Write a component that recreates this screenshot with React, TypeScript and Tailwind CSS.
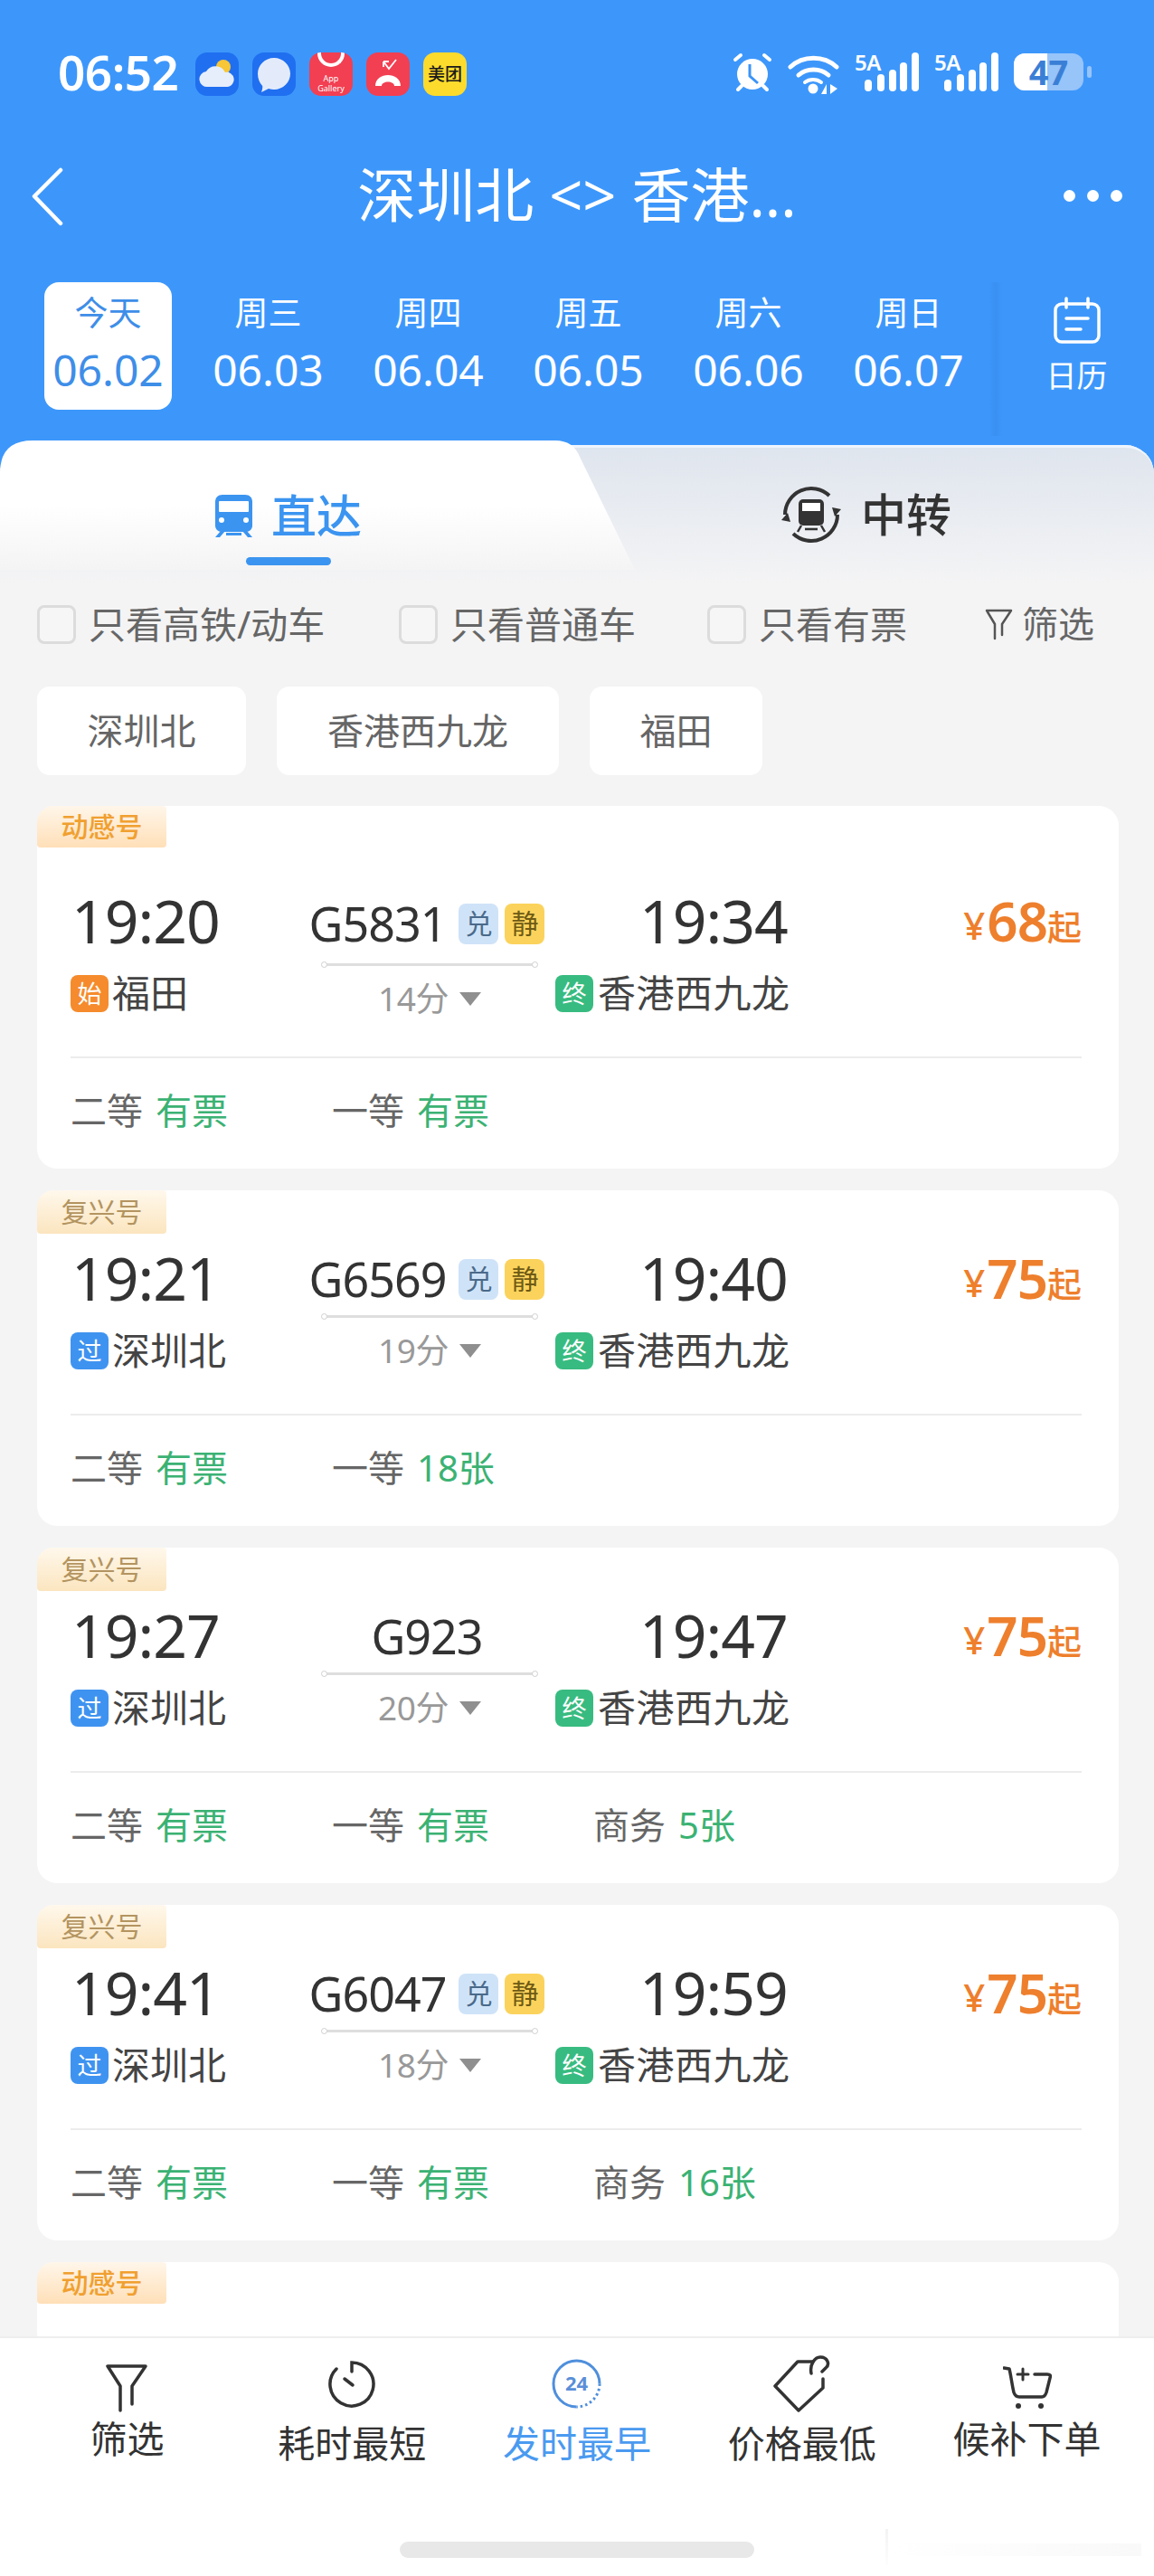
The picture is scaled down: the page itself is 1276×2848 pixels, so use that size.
import React from "react";

const FONT = { fontFamily: '"Noto Sans", "Noto Sans CJK SC", sans-serif' };

interface Seat {
  name: string;
  state: string;
}

interface Train {
  badge: "动感号" | "复兴号";
  dep: string;
  code: string;
  tags: boolean;
  arr: string;
  mark: "始" | "过";
  from: string;
  mins: string;
  price: string;
  seats: Seat[];
}

const trains: Train[] = [
  { badge: "动感号", dep: "19:20", code: "G5831", tags: true, arr: "19:34", mark: "始", from: "福田", mins: "14分", price: "68", seats: [{ name: "二等", state: "有票" }, { name: "一等", state: "有票" }] },
  { badge: "复兴号", dep: "19:21", code: "G6569", tags: true, arr: "19:40", mark: "过", from: "深圳北", mins: "19分", price: "75", seats: [{ name: "二等", state: "有票" }, { name: "一等", state: "18张" }] },
  { badge: "复兴号", dep: "19:27", code: "G923", tags: false, arr: "19:47", mark: "过", from: "深圳北", mins: "20分", price: "75", seats: [{ name: "二等", state: "有票" }, { name: "一等", state: "有票" }, { name: "商务", state: "5张" }] },
  { badge: "复兴号", dep: "19:41", code: "G6047", tags: true, arr: "19:59", mark: "过", from: "深圳北", mins: "18分", price: "75", seats: [{ name: "二等", state: "有票" }, { name: "一等", state: "有票" }, { name: "商务", state: "16张" }] },
];

const days = [
  ["周三", "06.03"],
  ["周四", "06.04"],
  ["周五", "06.05"],
  ["周六", "06.06"],
  ["周日", "06.07"],
];

function Signal() {
  return (
    <div className="relative w-[71px] h-[43px]">
      <span className="absolute left-0 -top-[1px] text-[24px] leading-[24px] font-semibold text-white tracking-[-0.5px]">5A</span>
      <svg className="absolute left-0 top-0" width="71" height="43" viewBox="0 0 71 43">
        <g fill="#fff">
          <rect x="11" y="30" width="8" height="13" rx="4" />
          <rect x="25" y="24" width="8" height="19" rx="4" />
          <rect x="38" y="19" width="8" height="24" rx="4" />
          <rect x="50" y="11" width="8" height="32" rx="4" />
          <rect x="63" y="0" width="8" height="43" rx="4" />
        </g>
      </svg>
    </div>
  );
}

function StatusBar() {
  return (
    <div className="h-[130px] pt-[56px] pl-[64px] pr-[69px] flex items-start">
      <span className="w-[152px] text-[53px] leading-[48px] font-semibold text-white tracking-[-0.5px]">06:52</span>
      <div className="mt-[2px] flex gap-[15px]">
        <div className="w-[48px] h-[48px] rounded-[13px] bg-[#1f6ff0] flex items-center justify-center">
          <svg width="42" height="38" viewBox="0 0 42 38">
            <circle cx="28" cy="11" r="8" fill="#f8c636" />
            <path d="M11 33a8.500 8.500 0 0 1-2-17 12 12 0 0 1 21 1 8 8 0 0 1 3 16z" fill="#e6eefb" />
          </svg>
        </div>
        <div className="w-[48px] h-[48px] rounded-[13px] bg-[#1f6ff0] flex items-center justify-center">
          <svg width="38" height="40" viewBox="0 0 38 40">
            <path d="M19 2c10 0 18 8 18 17.500S29 37 19 37c-2 0-4-.3-6-1l-8 4c1-3 1.500-5 1.200-7C3 29.500 1 25 1 19.500 1 10 9 2 19 2z" fill="#e3ebfb" />
          </svg>
        </div>
        <div className="relative w-[48px] h-[48px] rounded-[13px] bg-[#f23f52] overflow-hidden flex flex-col items-center justify-end pb-[3px]">
          <div className="absolute -top-[10px] left-[9px] w-[30px] h-[26px] rounded-b-full border-[4px] border-t-0 border-white" />
          <span className="text-[9px] leading-[11px] text-white">App</span>
          <span className="text-[9px] leading-[11px] text-white">Gallery</span>
        </div>
        <div className="w-[48px] h-[48px] rounded-[13px] bg-[#f23f52] flex items-center justify-center">
          <svg width="34" height="36" viewBox="0 0 34 36" fill="none">
            <path d="M12 4l6 8 8-10M12 4v6M12 4h6" stroke="#fff" strokeWidth="1.800" />
            <path d="M3 31c0-16 28-16 28 0h-7c0-6-14-6-14 0z" fill="#fff" />
          </svg>
        </div>
        <div className="w-[48px] h-[48px] rounded-[13px] bg-[#fddb2c] flex items-center justify-center">
          <span className="text-[19px] leading-none font-medium text-[#1a1a1a] whitespace-nowrap">美团</span>
        </div>
      </div>
      <div className="ml-auto mt-[2px] flex items-start gap-[17px]">
        <svg width="44" height="44" viewBox="0 0 44 44">
          <circle cx="22" cy="24" r="17" fill="#fff" />
          <path d="M19 13v13l9 8" stroke="#3b94f8" strokeWidth="3" fill="none" />
          <path d="M3 8l6-5M41 8l-6-5M6 41l4-4M38 41l-4-4" stroke="#fff" strokeWidth="4" strokeLinecap="round" />
        </svg>
        <svg className="mt-[2px]" width="57" height="45" viewBox="0 0 57 45" fill="none">
          <path d="M3 14c14-13 37-13 51 0" stroke="#fff" strokeWidth="5" strokeLinecap="round" />
          <path d="M12 23c9-8 24-8 33 0" stroke="#fff" strokeWidth="5" strokeLinecap="round" />
          <path d="M19 31c5-4 13-4 18 0" stroke="#fff" strokeWidth="4" strokeLinecap="round" />
          <circle cx="28" cy="38" r="5.500" fill="#fff" />
          <path d="M43 44v-11l-6 11zM47 33v11l8-6z" fill="#fff" />
        </svg>
        <Signal />
        <Signal />
        <div className="flex items-center gap-[4px] h-[42px]">
          <div className="relative w-[77px] h-[41px] rounded-[12px] bg-[#97c4f9] flex items-center justify-center">
            <div className="absolute left-0 top-0 bottom-0 w-[37px] rounded-l-[12px] bg-white" />
            <span className="relative text-[38px] leading-[41px] font-bold text-[#3a7fd6]">47</span>
          </div>
          <div className="w-[5px] h-[13px] rounded-full bg-[#97c4f9]" />
        </div>
      </div>
    </div>
  );
}

function TitleBar() {
  return (
    <div className="relative h-[170px] flex items-center justify-center">
      <svg className="absolute left-[33px] top-[55px]" width="38" height="65" viewBox="0 0 38 65" fill="none" stroke="#fff" strokeWidth="4.500" strokeLinecap="round" strokeLinejoin="round">
        <path d="M34 3L5 32l29 30" />
      </svg>
      <span className="text-[65px] leading-[70px] text-white whitespace-nowrap">深圳北 &lt;&gt; 香港...</span>
      <div className="absolute right-[35px] top-[80px] flex gap-[13px]">
        <div className="w-[13px] h-[13px] rounded-full bg-white" />
        <div className="w-[13px] h-[13px] rounded-full bg-white" />
        <div className="w-[13px] h-[13px] rounded-full bg-white" />
      </div>
    </div>
  );
}

function DayTabs() {
  return (
    <div className="h-[192px] pt-[12px] flex items-start pl-[49px]">
      <div className="w-[141px] h-[141px] rounded-[16px] bg-white flex flex-col items-center pt-[7px]">
        <span className="text-[37px] leading-[54px] text-[#3e8ee8]">今天</span>
        <span className="text-[48px] leading-[62px] text-[#3e8ee8] mt-[5px]">06.02</span>
      </div>
      <div className="flex ml-[18px]">
        {days.map(([week, date]) => (
          <div key={date} className="w-[177px] flex flex-col items-center pt-[7px]">
            <span className="text-[37px] leading-[54px] text-white">{week}</span>
            <span className="text-[48px] leading-[62px] text-white mt-[5px]">{date}</span>
          </div>
        ))}
      </div>
      <div className="w-[183px] h-[170px] pl-[12px] bg-[linear-gradient(90deg,#3d97fb,#3a90f2_8px,#3d97fb_16px)] flex flex-col items-center">
        <svg className="mt-[16px]" width="52" height="52" viewBox="0 0 52 52" fill="none" stroke="#fff" strokeWidth="3.500">
          <rect x="2" y="8" width="48" height="42" rx="7" />
          <path d="M14 2v10M38 2v10M14 24h24M14 36h16" strokeLinecap="round" />
        </svg>
        <span className="text-[34px] leading-[46px] text-white mt-[12px]">日历</span>
      </div>
    </div>
  );
}

function TrainIcon({ color }: { color: string }) {
  return (
    <svg width="43" height="48" viewBox="0 0 43 48">
      <path d="M9 1h25c5 0 8 3 8 8v26c0 4-3 7-7 7H8c-4 0-7-3-7-7V9c0-5 3-8 8-8z" fill={color} />
      <rect x="5" y="8" width="33" height="12" rx="1" fill="#fff" />
      <circle cx="8" cy="29" r="3" fill="#fff" />
      <circle cx="35" cy="29" r="3" fill="#fff" />
      <path d="M7 41l-6 7h5l6-7zM36 41l6 7h-5l-6-7zM13 43h17v3H13z" fill={color} />
    </svg>
  );
}

function TransferIcon() {
  return (
    <svg width="66" height="66" viewBox="0 0 66 66" fill="none">
      <path d="M4 33a29 29 0 0 1 49-21" stroke="#333" strokeWidth="4" />
      <path d="M62 33a29 29 0 0 1-49 21" stroke="#333" strokeWidth="4" />
      <path d="M0 39l7-8 3 10zM66 27l-7 8-3-10z" fill="#333" />
      <rect x="19" y="16" width="28" height="29" rx="5" fill="#333" />
      <rect x="23" y="20" width="20" height="9" fill="#fff" />
      <path d="M22 45l-4 7M44 45l4 7M26 49h14" stroke="#333" strokeWidth="2.500" />
    </svg>
  );
}

function Tabs() {
  return (
    <div className="relative h-[154px] bg-[linear-gradient(#dfe5ee,#f4f4f5)] rounded-t-[32px] border-t-[3px] border-[#eef5fd]">
      {/* white active tab with a slanted edge */}
      <div className="absolute left-0 -top-[8px] h-[143px] w-[702px] bg-[linear-gradient(#ffffff_50%,#f4f4f5)] [clip-path:path('M0_143L0_36Q0_0_36_0L614_0Q634_0_641_18L702_143Z')]" />
      <div className="absolute left-[237px] top-[45px] flex items-center gap-[20px]">
        <TrainIcon color="#3b94f0" />
        <span className="text-[50px] leading-[60px] font-medium text-[#3b94f0]">直达</span>
      </div>
      <div className="absolute left-[272px] top-[121px] w-[94px] h-[9px] rounded-full bg-[#3b94f0]" />
      <div className="absolute left-[864px] top-[41px] flex items-center gap-[22px]">
        <TransferIcon />
        <span className="text-[50px] leading-[60px] font-medium text-[#333]">中转</span>
      </div>
    </div>
  );
}

function Check({ label }: { label: string }) {
  return (
    <div className="flex items-center gap-[14px]">
      <div className="w-[43px] h-[43px] rounded-[8px] border-[3px] border-[#dcdcdc] bg-[#f6f6f6]" />
      <span className="text-[41px] leading-[48px] text-[#666] whitespace-nowrap">{label}</span>
    </div>
  );
}

function Chip({ label, w }: { label: string; w: string }) {
  return (
    <div className={`${w} h-[98px] rounded-[14px] bg-white flex items-center justify-center text-[40px] text-[#666]`}>
      {label}
    </div>
  );
}

function Filters() {
  return (
    <>
      <div className="h-[113px] pl-[41px] pt-[20px] flex items-start">
        <div className="w-[400px]"><Check label="只看高铁/动车" /></div>
        <div className="w-[341px]"><Check label="只看普通车" /></div>
        <Check label="只看有票" />
        <div className="ml-[86px] flex items-center gap-[10px]">
          <svg width="31" height="35" viewBox="0 0 31 35" fill="none" stroke="#555" strokeWidth="2.500" strokeLinejoin="round" strokeLinecap="round">
            <path d="M2 2h27L19 17v12M2 2l9 15v16" />
          </svg>
          <span className="text-[40px] leading-[48px] text-[#666]">筛选</span>
        </div>
      </div>
      <div className="flex pl-[41px] gap-[34px]">
        <Chip label="深圳北" w="w-[231px]" />
        <Chip label="香港西九龙" w="w-[312px]" />
        <Chip label="福田" w="w-[191px]" />
      </div>
    </>
  );
}

function Badge({ text }: { text: string }) {
  const isOrange = text === "动感号";
  return (
    <div
      className={
        isOrange
          ? "w-[143px] h-[46px] rounded-tl-[18px] rounded-b-[4px] rounded-tr-[4px] bg-[linear-gradient(#fff6ea,#ffdfb8)] flex items-center justify-center text-[30px] leading-none font-medium text-[#f0a030]"
          : "w-[143px] h-[48px] rounded-tl-[18px] rounded-b-[4px] rounded-tr-[4px] bg-[linear-gradient(#fff8ec,#fbe5bf)] flex items-center justify-center text-[30px] leading-none text-[#b39460]"
      }
    >
      {text}
    </div>
  );
}

function TrainCard({ train, tall }: { train: Train; tall: boolean }) {
  return (
    <div className={`${tall ? "h-[401px]" : "h-[371px]"} rounded-[22px] bg-white`}>
      <Badge text={train.badge} />
      <div className={`${tall ? "pt-[40px]" : "pt-[8px]"} pl-[37px] pr-[41px] flex`}>
        <div className="w-[278px]">
          <div className="pl-[1px] text-[66px] leading-[80px] text-[#333] tracking-[-1px]">{train.dep}</div>
          <div className="mt-[17px] h-[48px] flex items-center gap-[4px]">
            <div className={`w-[42px] h-[41px] rounded-[8px] ${train.mark === "始" ? "bg-[#f58b2c]" : "bg-[#3f93f0]"} flex items-center justify-center text-[27px] leading-none text-white`}>{train.mark}</div>
            <span className="text-[42px] leading-[48px] text-[#444]">{train.from}</span>
          </div>
        </div>
        <div className={`w-[238px] ${tall ? "mt-[2px]" : ""} flex flex-col items-center`}>
          <div className="h-[84px] pr-[6px] flex items-center justify-center whitespace-nowrap">
            <span className="text-[52px] leading-[60px] text-[#333] tracking-[-1px]">{train.code}</span>
            {train.tags && (
              <>
                <span className="ml-[14px] w-[44px] h-[45px] rounded-[8px] bg-[#cfe3f8] flex items-center justify-center text-[30px] leading-none text-[#4a6a8a]">兑</span>
                <span className="ml-[7px] w-[44px] h-[45px] rounded-[8px] bg-[#fbd35c] flex items-center justify-center text-[30px] leading-none text-[#6f5a14]">静</span>
              </>
            )}
          </div>
          <div className={`relative w-[238px] h-[3px] ${tall ? "mt-[2px]" : "-mt-[2px]"} bg-[#dedede]`}>
            <div className="absolute -left-[1px] -top-[2px] w-[7px] h-[7px] rounded-full bg-white border border-[#cfcfcf]" />
            <div className="absolute -right-[1px] -top-[2px] w-[7px] h-[7px] rounded-full bg-white border border-[#cfcfcf]" />
          </div>
          <div className="mt-[13px] flex items-center gap-[12px]">
            <span className="text-[37px] leading-[46px] text-[#999] tracking-[-0.5px]">{train.mins}</span>
            <div className="w-0 h-0 border-l-[12px] border-r-[12px] border-t-[15px] border-l-transparent border-r-transparent border-t-[#8f8f8f]" />
          </div>
        </div>
        <div className="ml-[20px]">
          <div className="pl-[93px] text-[66px] leading-[80px] text-[#333] tracking-[-1px]">{train.arr}</div>
          <div className="mt-[17px] h-[48px] flex items-center gap-[5px]">
            <div className="w-[42px] h-[41px] rounded-[8px] bg-[#38bb80] flex items-center justify-center text-[27px] leading-none text-white">终</div>
            <span className="text-[42px] leading-[48px] text-[#444] whitespace-nowrap tracking-[0.5px]">香港西九龙</span>
          </div>
        </div>
        <div className="ml-auto h-[76px] flex items-end text-[#ee7f2d] font-semibold whitespace-nowrap">
          <span className="text-[42px] leading-[60px] font-medium">¥</span>
          <span className="text-[60px] leading-[70px] ml-[2px] tracking-[-1px]">{train.price}</span>
          <span className="text-[38px] leading-[58px] font-medium">起</span>
        </div>
      </div>
      <div className={`ml-[37px] mr-[41px] ${tall ? "mt-[41px]" : "mt-[46px]"} border-t-[2px] border-[#ececec] flex pt-[30px]`}>
        {train.seats.map((seat) => (
          <div key={seat.name} className="w-[289px] flex gap-[14px] text-[40px] leading-[56px] whitespace-nowrap">
            <span className="text-[#666]">{seat.name}</span>
            <span className="text-[#3bb273]">{seat.state}</span>
          </div>
        ))}
      </div>
    </div>
  );
}

function FilterIcon() {
  return (
    <svg width="46" height="53" viewBox="0 0 46 53" fill="none" stroke="#333" strokeWidth="3.500" strokeLinejoin="round" strokeLinecap="round">
      <path d="M2 2h42L29 24v20M2 2l14 22v27" />
    </svg>
  );
}

function ClockIcon() {
  return (
    <svg width="52" height="53" viewBox="0 0 52 53" fill="none" stroke="#333" strokeWidth="3.500" strokeLinecap="round">
      <path d="M26 13V3a24 24 0 1 1-17 7" />
      <path d="M18 21l9 7" />
    </svg>
  );
}

function Clock24Icon() {
  return (
    <svg width="55" height="55" viewBox="0 0 55 55" fill="none" stroke="#4f8fdc" strokeWidth="3">
      <path d="M53 27.500A25.500 25.500 0 1 0 27.500 53" />
      <path d="M53 27.500A25.500 25.500 0 0 1 27.500 53" strokeDasharray="2.500 3" />
      <text x="27.500" y="35" textAnchor="middle" fontSize="22" fontWeight="700" fill="#5a8fd8" stroke="none" fontFamily="Noto Sans">24</text>
    </svg>
  );
}

function TagIcon() {
  return (
    <svg width="63" height="63" viewBox="0 0 63 63" fill="none" stroke="#333" strokeWidth="3.500" strokeLinejoin="round" strokeLinecap="round">
      <path d="M44 7H27L2 34l26 27 27-25V26" />
      <path d="M42 20c-2-10 4-18 10-18 8 0 11 8 6 12l-4 4" />
    </svg>
  );
}

function CartIcon() {
  return (
    <svg width="54" height="48" viewBox="0 0 54 48" fill="none" stroke="#333" strokeWidth="3.500" strokeLinecap="round" strokeLinejoin="round">
      <path d="M1 2l6 1c2 8 3 18 5 26 1 3 3 5 6 5h25c3 0 4-2 5-5l4-16c1-3 0-4-3-4H35" />
      <path d="M22 3v12M16 9h12" strokeWidth="3" />
      <circle cx="17" cy="44" r="3" fill="#333" stroke="none" />
      <circle cx="42" cy="44" r="3" fill="#333" stroke="none" />
    </svg>
  );
}

function BottomBar() {
  return (
    <div className="absolute left-0 right-0 bottom-0 h-[265px] bg-white border-t-[2px] border-[#eeeeee]">
      <div className="grid grid-cols-5 px-[16px] text-[41px] leading-[50px] text-[#333] whitespace-nowrap">
        <div className="flex flex-col items-center pt-[29px]"><FilterIcon /><span className="mt-[4px]">筛选</span></div>
        <div className="flex flex-col items-center pt-[24px]"><ClockIcon /><span className="mt-[14px]">耗时最短</span></div>
        <div className="flex flex-col items-center pt-[23px]"><Clock24Icon /><span className="mt-[13px] text-[#4a9af0]">发时最早</span></div>
        <div className="flex flex-col items-center pt-[19px]"><TagIcon /><span className="mt-[9px]">价格最低</span></div>
        <div className="flex flex-col items-center pt-[31px]"><CartIcon /><span className="mt-[7px]">候补下单</span></div>
      </div>
      <div className="absolute left-[442px] bottom-[20px] w-[392px] h-[18px] rounded-full bg-[#e8e8e8]" />
      <div className="absolute left-[979px] bottom-[12px] w-[3px] h-[40px] bg-[linear-gradient(#f3f3f3,#fdfdfd)]" />
      <div className="absolute left-[982px] bottom-[22px] w-[280px] h-[14px] bg-[linear-gradient(90deg,#ffffff,#f9f9f9)]" />
    </div>
  );
}

export default function App() {
  return (
    <div className="relative w-[1276px] h-[2848px] overflow-hidden bg-[#3d97fb]" style={FONT}>
      <StatusBar />
      <TitleBar />
      <DayTabs />
      <div className="relative bg-[#f4f4f5] rounded-t-[32px] h-[2356px]">
        <Tabs />
        <Filters />
        <div className="ml-[41px] mr-[39px] mt-[34px] flex flex-col gap-[24px]">
          {trains.map((train, i) => (
            <TrainCard key={train.dep} train={train} tall={i === 0} />
          ))}
          <div className="h-[100px] rounded-[22px] bg-white">
            <Badge text="动感号" />
          </div>
        </div>
      </div>
      <BottomBar />
    </div>
  );
}
